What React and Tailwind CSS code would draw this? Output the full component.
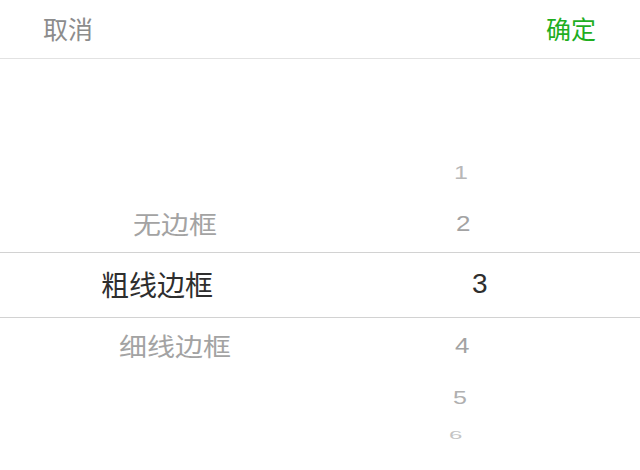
import React from "react";

// ======================================================
// Picker rows (wheel effect faked with scaleY + offsets)
// ======================================================
const rows = [
  { h: "h-[52px]", label: "", lx: "pl-[133px]", num: "1", nx: "pl-[14px]", tone: "text-[#b8b8b8]", size: "text-[25px]", sy: "scale-y-[0.72]" },
  { h: "h-[54px]", label: "无边框", lx: "pl-[133px]", num: "2", nx: "pl-[16px]", tone: "text-[#a3a3a3]", size: "text-[26px]", sy: "scale-y-[0.88] -translate-y-[2px]" },
  { h: "h-[66px]", label: "粗线边框", lx: "pl-[101px]", num: "3", nx: "pl-[32px]", tone: "text-[#2e2e2e]", size: "text-[28px]", sy: "-translate-y-[1px]", active: true },
  { h: "h-[54px]", label: "细线边框", lx: "pl-[119px]", num: "4", nx: "pl-[15px]", tone: "text-[#a3a3a3]", size: "text-[26px]", sy: "scale-y-[0.88]" },
  { h: "h-[50px]", label: "", lx: "pl-[119px]", num: "5", nx: "pl-[13px]", tone: "text-[#b0b0b0]", size: "text-[25px]", sy: "scale-y-[0.72]" },
  { h: "h-[26px]", label: "", lx: "pl-[119px]", num: "6", nx: "pl-[9px]", tone: "text-[#c4c4c4]", size: "text-[24px]", sy: "scale-y-[0.42]" },
];

const cjk = "font-['Noto_Sans_CJK_SC','Noto_Sans',sans-serif]";
const num = "font-['Liberation_Sans','Arial',sans-serif]";

const App = () => {
  return (
    <div className="w-[640px] h-[470px] bg-white overflow-hidden">
      {/* ================= Header ================= */}
      <div className={`h-[59px] flex items-center justify-between pl-[43px] pr-[44px] border-b border-[#e2e2e2] text-[25px] ${cjk}`}>
        <span className="text-[#8c8c8c]">取消</span>
        <span className="text-[#1fae1f]">确定</span>
      </div>

      {/* ================= Wheel ================= */}
      <div className="h-[87px]" />
      {rows.map((r, i) => (
        <div
          key={i}
          className={`${r.h} grid grid-cols-[440px_200px] items-center ${
            r.active ? "border-y border-[#d2d2d2]" : ""
          }`}
        >
          <div className={`${r.lx} ${r.tone} text-[28px] leading-none whitespace-nowrap ${cjk}`}>
            <span className={`inline-block origin-center ${r.sy}`}>{r.label}</span>
          </div>
          <div className={`${r.nx} ${r.tone} ${r.size} leading-none ${num}`}>
            <span className={`inline-block origin-center ${r.sy}`}>{r.num}</span>
          </div>
        </div>
      ))}
    </div>
  );
};

export default App;
